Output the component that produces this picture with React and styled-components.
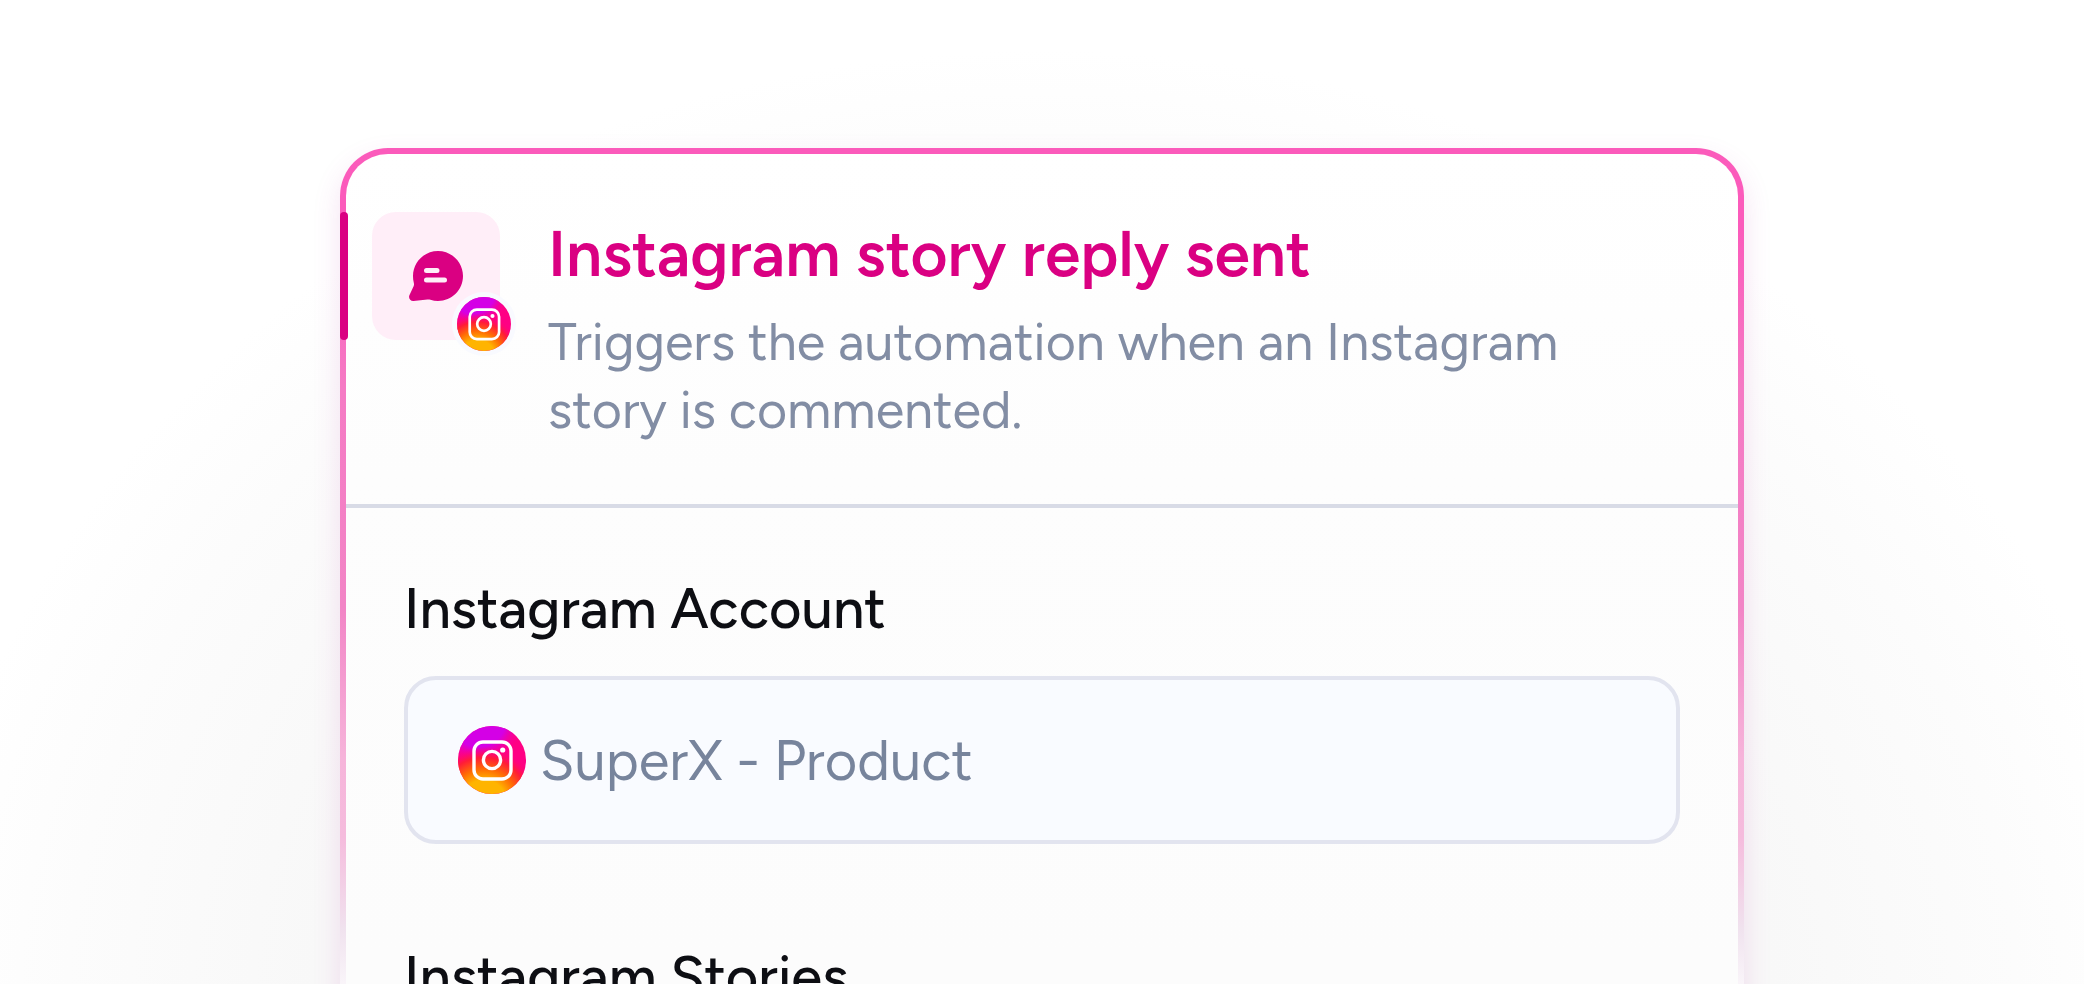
import React from "react";
import styled, { createGlobalStyle } from "styled-components";

const GlobalStyle = createGlobalStyle`
  * { box-sizing: border-box; }
  body { margin: 0; background: #ffffff; font-family: Figtree, Lato, "Open Sans", sans-serif; }
`;

const Page = styled.main`
  height: 100vh;
  overflow: hidden;
  padding: 148px 48px 0;
  background: radial-gradient(1120px 960px at 50% 1010px, #f6f6f8 0%, #f8f8f8 65%, #fcfcfc 87%, #ffffff 100%);
`;

const Card = styled.section`
  position: relative;
  max-width: 1404px;
  margin: 0 auto;
  border: 6px solid transparent;
  border-radius: 48px;
  background:
    linear-gradient(#ffffff, #fdfdfd 320px, #fcfcfc 800px) padding-box,
    linear-gradient(#fb5bbb 80px, #f57ac4 240px, #f285c6 460px, #f6b4da 610px, #f5bcdd 690px, #f0e2ee 780px, #faf6fa 840px) border-box;
  box-shadow: 0 12px 28px rgba(190, 60, 170, 0.15);
`;

const Header = styled.header`
  display: flex;
  gap: 48px;
  padding: 58px 96px 60px 26px;
  border-bottom: 4px solid #d8dbe6;
`;

const Accent = styled.span`
  position: absolute;
  left: -6px;
  top: 58px;
  width: 8px;
  height: 128px;
  border-radius: 4px;
  background: #da0082;
`;

const Tile = styled.div`
  position: relative;
  display: flex;
  flex: none;
  align-items: center;
  justify-content: center;
  width: 128px;
  height: 128px;
  border-radius: 24px;
  background: #ffeef8;
`;

const Badge = styled.span`
  position: absolute;
  right: -16px;
  bottom: -16px;
  display: flex;
  padding: 5px;
  border-radius: 50%;
  background: #f9faff;
`;

const Heading = styled.div`
  flex: 1;
  min-width: 0;
`;

const Title = styled.h1`
  margin: 0 0 12px;
  font-size: 64px;
  line-height: 84px;
  font-weight: 600;
  color: #da0082;
`;

const Description = styled.p`
  margin: 0;
  font-size: 52px;
  line-height: 68px;
  color: #828da4;
`;

const Body = styled.div`
  display: flex;
  flex-direction: column;
  gap: 96px;
  padding: 64px 58px;
`;

const Group = styled.div`
  display: flex;
  flex-direction: column;
  gap: 30px;
`;

const Label = styled.label`
  font-size: 56px;
  line-height: 74px;
  font-weight: 500;
  color: #0d0e13;
`;

const GroupTitle = styled(Label).attrs({ as: "h2" })`
  margin: 0;
`;

const Field = styled.div`
  display: flex;
  align-items: center;
  gap: 14px;
  height: 168px;
  padding: 0 50px;
  border: 4px solid #e2e4ef;
  border-radius: 32px;
  background: #f9fbff;
`;

const FieldInput = styled.input`
  flex: 1;
  min-width: 0;
  height: 80px;
  padding: 0;
  border: 0;
  outline: 0;
  background: transparent;
  font: inherit;
  font-size: 56px;
  color: #77849c;
`;

function InstagramIcon({ id, size }) {
  return (
    <svg width={size} height={size} viewBox="0 0 68 68" aria-hidden="true">
      <defs>
        <radialGradient id={`${id}-top`} cx="0.3" cy="-0.1" r="0.68">
          <stop offset="0.6" stopColor="#d400e6" />
          <stop offset="1" stopColor="#ff0084" stopOpacity="0" />
        </radialGradient>
        <radialGradient id={`${id}-bottom`} cx="0.38" cy="1.12" r="0.82">
          <stop offset="0.4" stopColor="#ffb400" />
          <stop offset="0.6" stopColor="#ff6a05" />
          <stop offset="0.8" stopColor="#ff1c38" />
          <stop offset="1" stopColor="#ff0084" stopOpacity="0" />
        </radialGradient>
      </defs>
      <circle cx="34" cy="34" r="34" fill="#ff0084" />
      <circle cx="34" cy="34" r="34" fill={`url(#${id}-top)`} />
      <circle cx="34" cy="34" r="34" fill={`url(#${id}-bottom)`} />
      <rect x="16" y="16" width="37" height="37" rx="9" fill="none" stroke="#fff" strokeWidth="3.4" />
      <circle cx="34" cy="34" r="8.6" fill="none" stroke="#fff" strokeWidth="3.4" />
      <circle cx="44.7" cy="24" r="2.6" fill="#fff" />
    </svg>
  );
}

function ReplyIcon() {
  return (
    <svg width="56" height="52" viewBox="0 0 56 52" aria-hidden="true">
      <path
        fill="#da0082"
        d="M30 1C43.800 1 55 12.200 55 26S43.800 51 30 51c-2.600 0-5.200-.400-7.600-1.200-1-.300-2-.300-3-.200L5.600 51C2.400 51.300.200 48.200 1.400 45.300L5.600 36.200c.500-1.100.500-2.200.200-3.400C5.200 30.600 5 28.300 5 26 5 12.200 16.200 1 30 1Z"
      />
      <path d="M18.500 20.500h10.500M18.500 30h18" stroke="#ffeef8" strokeWidth="5" strokeLinecap="round" />
    </svg>
  );
}

export default function App() {
  return (
    <>
      <GlobalStyle />
      <Page>
        <Card>
          <Accent />
          <Header>
            <Tile>
              <ReplyIcon />
              <Badge>
                <InstagramIcon id="badge" size={54} />
              </Badge>
            </Tile>
            <Heading>
              <Title>Instagram story reply sent</Title>
              <Description>Triggers the automation when an Instagram story is commented.</Description>
            </Heading>
          </Header>
          <Body>
            <Group>
              <Label htmlFor="account">Instagram Account</Label>
              <Field>
                <InstagramIcon id="account-icon" size={68} />
                <FieldInput id="account" type="text" readOnly value="SuperX - Product" />
              </Field>
            </Group>
            <Group>
              <GroupTitle>Instagram Stories</GroupTitle>
            </Group>
          </Body>
        </Card>
      </Page>
    </>
  );
}
